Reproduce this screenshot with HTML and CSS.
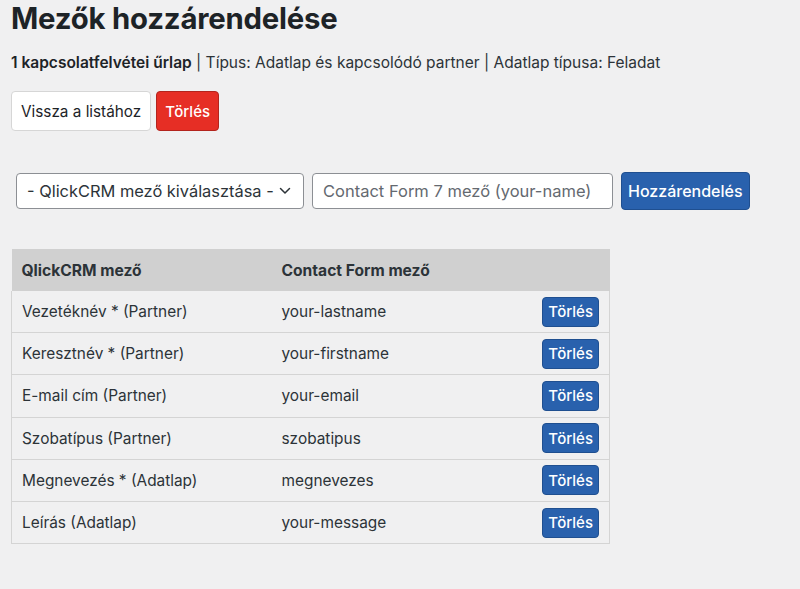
FILE: index.html
```html
<!DOCTYPE html>
<html lang="hu">
<head>
<meta charset="utf-8">
<title>Mezők hozzárendelése</title>
<link rel="stylesheet" href="styles.css">
</head>
<body>
<div class="wrap">
  <h1 class="title">Mezők hozzárendelése</h1>
  <p class="meta"><strong>1 kapcsolatfelvétei űrlap</strong> | Típus: Adatlap és kapcsolódó partner | Adatlap típusa: Feladat</p>
  <div class="actions">
    <button class="btn btn-light">Vissza a listához</button>
    <button class="btn btn-red">Törlés</button>
  </div>
  <form class="mapform">
    <div class="select">
      <span>- QlickCRM mező kiválasztása -</span>
      <svg class="chev" width="12" height="8" viewBox="0 0 12 8"><path d="M1.5 1.5 L6 6 L10.5 1.5" fill="none" stroke="#2c3338" stroke-width="1.5" stroke-linecap="round" stroke-linejoin="round"/></svg>
    </div>
    <input class="input" type="text" placeholder="Contact Form 7 mező (your-name)">
    <button type="button" class="btn btn-blue btn-add">Hozzárendelés</button>
  </form>
  <table class="map">
    <thead>
      <tr><th class="c1">QlickCRM mező</th><th class="c2">Contact Form mező</th><th class="c3"></th></tr>
    </thead>
    <tbody>
      <tr><td>Vezetéknév * (Partner)</td><td>your-lastname</td><td class="c3"><button class="btn btn-blue btn-sm">Törlés</button></td></tr>
      <tr><td>Keresztnév * (Partner)</td><td>your-firstname</td><td class="c3"><button class="btn btn-blue btn-sm">Törlés</button></td></tr>
      <tr><td>E-mail cím (Partner)</td><td>your-email</td><td class="c3"><button class="btn btn-blue btn-sm">Törlés</button></td></tr>
      <tr><td>Szobatípus (Partner)</td><td>szobatipus</td><td class="c3"><button class="btn btn-blue btn-sm">Törlés</button></td></tr>
      <tr><td>Megnevezés * (Adatlap)</td><td>megnevezes</td><td class="c3"><button class="btn btn-blue btn-sm">Törlés</button></td></tr>
      <tr><td>Leírás (Adatlap)</td><td>your-message</td><td class="c3"><button class="btn btn-blue btn-sm">Törlés</button></td></tr>
    </tbody>
  </table>
</div>
</body>
</html>
```
FILE: styles.css
```css
html, body {
  margin: 0;
  background: #f0f0f1;
  font-family: Inter, "Noto Sans", "Liberation Sans", sans-serif;
  color: #1d2327;
}
.wrap {
  padding: 0 11px;
}
.title {
  margin: 0;
  padding-top: 1px;
  font-size: 29.3px;
  line-height: 36px;
  font-weight: 700;
  color: #1d2327;
  letter-spacing: -0.2px;
}
.meta {
  margin: 16px 0 0;
  font-size: 15.5px;
  line-height: 20px;
  color: #2c3338;
}
.meta strong {
  color: #1d2327;
  font-weight: 600;
}
.actions {
  display: flex;
  gap: 5px;
  margin-top: 18px;
}
.btn {
  font-family: inherit;
  font-size: 15px;
  border-radius: 4px;
  border: 1px solid;
  cursor: pointer;
}
.btn-light {
  height: 40px;
  padding: 0 9px;
  background: #fff;
  border-color: #d6d6d6;
  color: #1d2327;
  font-size: 15.3px;
}
.btn-red {
  height: 40px;
  padding: 0 8px;
  background: #e62e25;
  border-color: #b3241d;
  color: #fff;
  font-weight: 500;
}
.btn-blue {
  background: #2961ad;
  border-color: #1f4f90;
  color: #fff;
  font-weight: 500;
}
.mapform {
  display: flex;
  align-items: center;
  gap: 8px;
  margin: 41px 0 0 5px;
}
.select {
  box-sizing: border-box;
  width: 288px;
  height: 36px;
  border: 1px solid #8c8f94;
  border-radius: 4px;
  background: #fff;
  display: flex;
  align-items: center;
  justify-content: space-between;
  padding: 0 12px 0 10px;
  font-size: 16.4px;
  color: #2c3338;
}
.input {
  box-sizing: border-box;
  width: 301px;
  height: 36px;
  border: 1px solid #8c8f94;
  border-radius: 4px;
  background: #fff;
  padding: 0 10px;
  font-family: inherit;
  font-size: 16.5px;
  color: #2c3338;
}
.input::placeholder {
  color: #646970;
}
.btn-add {
  height: 38px;
  padding: 0 6px;
  font-size: 16px;
}
.map {
  margin-top: 39px;
  width: 599px;
  border-collapse: collapse;
  font-size: 15.4px;
  color: #2c3338;
}
.map th {
  background: #d0d0d0;
  height: 42px;
  text-align: left;
  font-weight: 700;
  font-size: 15.6px;
  color: #2c3338;
  padding: 0 10px;
}
.map td {
  height: 41.2px;
  padding: 0 10px;
  border-bottom: 1px solid #d4d4d4;
}
.map tbody tr {
  border-left: 1px solid #d4d4d4;
  border-right: 1px solid #d4d4d4;
}
.map .c1 { width: 240px; }
.map .c3 { text-align: right; width: 70px; }
.btn-sm {
  height: 30px;
  padding: 0 5px;
  font-size: 15px;
}
```
